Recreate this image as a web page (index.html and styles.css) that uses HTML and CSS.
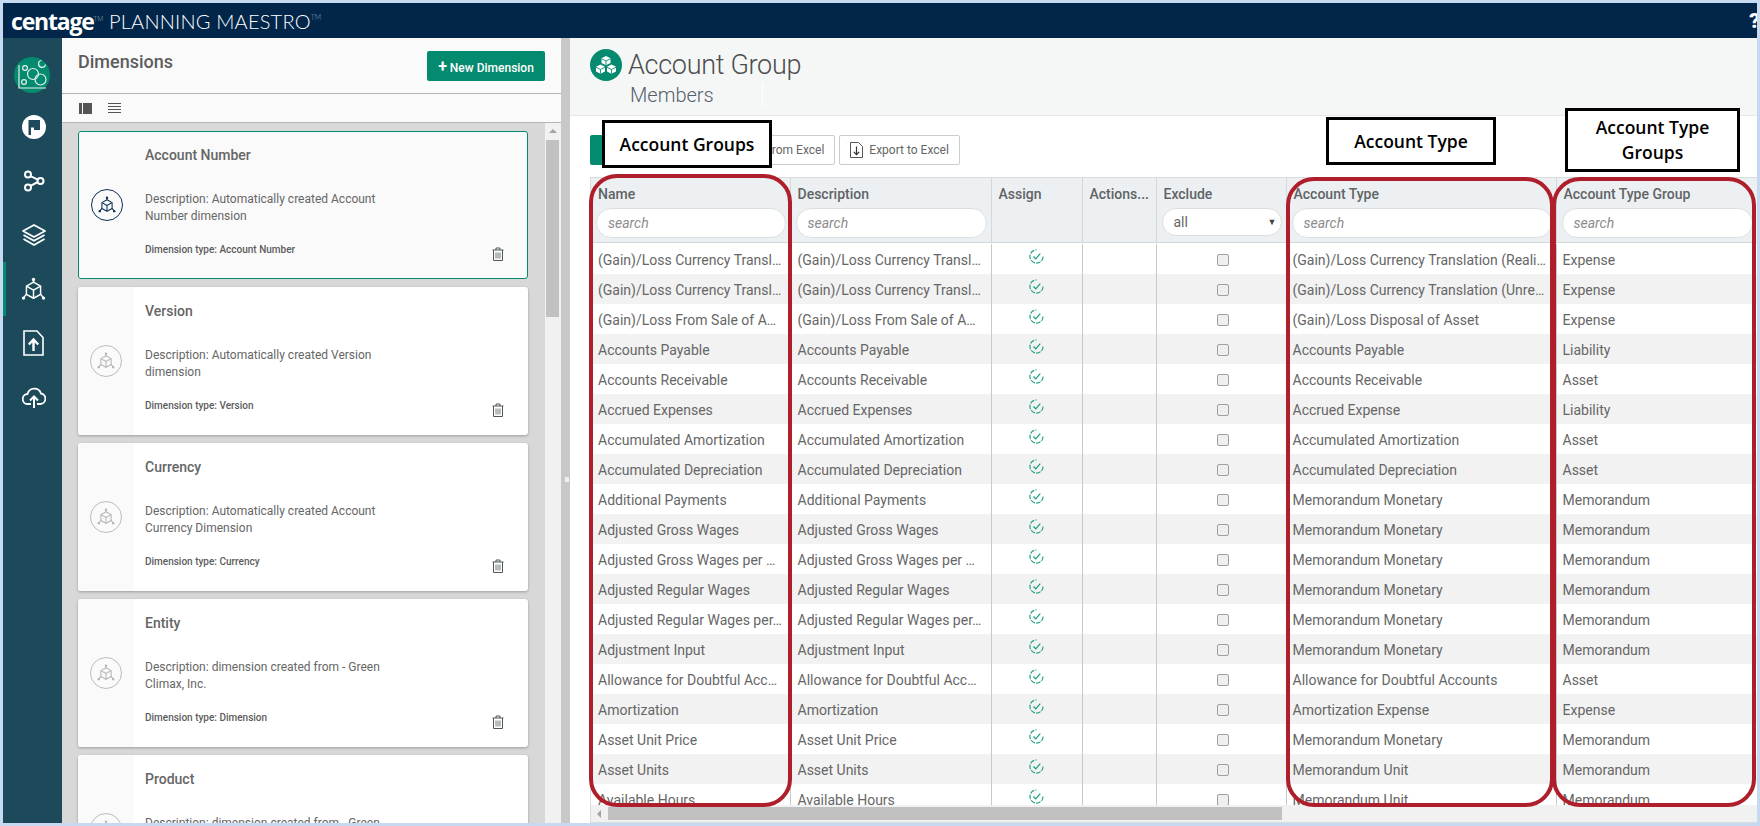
FILE: index.html
```html
<!DOCTYPE html>
<html lang="en">
<head>
    <meta charset="UTF-8">
    <title>Centage Planning Maestro</title>
    <link rel="stylesheet" href="styles.css">
</head>

<body>
    <svg class="icon-defs" aria-hidden="true">
        <symbol id="i-cube" viewBox="0 0 24 24">
            <g fill="none" stroke="currentColor" stroke-width="1.400" stroke-linejoin="round">
                <path d="M12 5l6.800 3.800v7.800L12 20.400l-6.800-3.800V8.800z"/>
                <path d="M5.200 8.800L12 12.600l6.800-3.800M12 12.600v7.800"/>
                <path d="M12 5V2.500M5.200 16.600L2.500 19.800M18.800 16.600l2.700 3.200"/>
            </g>
            <g fill="currentColor">
                <circle cx="12" cy="2.300" r="1.600"/>
                <circle cx="2.400" cy="20.200" r="1.600"/>
                <circle cx="21.600" cy="20.200" r="1.600"/>
            </g>
        </symbol>
        <symbol id="i-trash" viewBox="0 0 12 14">
            <g fill="none" stroke="currentColor" stroke-width="1">
                <path d="M.5 3h11M4 3V1h4v2M1.500 3v10.500h9V3"/>
                <path d="M4 5.500v6M6 5.500v6M8 5.500v6" stroke-width=".8"/>
            </g>
        </symbol>
        <symbol id="i-check" viewBox="0 0 16 16">
            <g fill="none" stroke="#1c9c80">
                <path d="M15 8A7 7 0 1 1 8 1" stroke-width="1.200" stroke-dasharray="5 1.300"/>
                <path d="M4.800 8l2.400 2.600 4.800-5.600" stroke-width="1.300"/>
            </g>
        </symbol>
        <symbol id="i-sheet" viewBox="0 0 13 16">
            <path d="M.5.5h8l4 4v11H.5z" fill="none" stroke="#555"/>
            <path d="M6.500 4.500v8M3.800 9.800l2.700 2.900 2.700-2.900" fill="none" stroke="#333" stroke-width="1.200"/>
        </symbol>
    </svg>

    <div class="app">
        <header class="topbar">
            <span class="brand">centage<sup>TM</sup></span>
            <span class="product">PLANNING MAESTRO<sup>TM</sup></span>
            <span class="help">?</span>
        </header>

        <div class="workspace">
            <nav class="sidebar">
                <svg class="nav-logo" viewBox="0 0 36 36">
                    <circle cx="18" cy="18" r="18" fill="#048a6e"/>
                    <g fill="none" stroke="#e4f2ee" stroke-width="1.200">
                        <path d="M5 8v23h27"/>
                        <circle cx="11" cy="11" r="2.400"/>
                        <circle cx="10" cy="25" r="2.400"/>
                        <circle cx="19" cy="17" r="5.500"/>
                        <circle cx="26.500" cy="22.500" r="5.500"/>
                        <path d="M27.500 3.500a3.500 3.500 0 1 0 4 4"/>
                    </g>
                </svg>
                <a class="nav-item">
                    <svg width="24" height="24" viewBox="0 0 24 24">
                        <circle cx="12" cy="12" r="12" fill="#fff"/>
                        <path d="M6.500 5h11.500v10h-6v-2.500H9V20H6.500z" fill="#1c4a5a"/>
                    </svg>
                </a>
                <a class="nav-item">
                    <svg width="22" height="22" viewBox="0 0 22 22" fill="none" stroke="#fff" stroke-width="2">
                        <circle cx="5" cy="4.500" r="3"/>
                        <circle cx="5" cy="17.500" r="3"/>
                        <circle cx="17.500" cy="11" r="3"/>
                        <path d="M7.500 6.200l7.300 3.400M7.500 15.800l7.300-3.800"/>
                    </svg>
                </a>
                <a class="nav-item">
                    <svg width="24" height="22" viewBox="0 0 24 22" fill="none" stroke="#fff" stroke-width="1.800" stroke-linejoin="round">
                        <path d="M12 1L23 7l-11 6L1 7z"/>
                        <path d="M1.500 11l10.500 5.800L22.500 11"/>
                        <path d="M1.500 15l10.500 6 10.500-6"/>
                    </svg>
                </a>
                <a class="nav-item active">
                    <svg class="nav-cube"><use href="#i-cube"/></svg>
                </a>
                <a class="nav-item">
                    <svg width="21" height="26" viewBox="0 0 21 26" fill="none" stroke="#fff" stroke-width="1.600">
                        <path d="M1 1h13l6 6.500V25H1z"/>
                        <path d="M10.500 21V10M5.800 14.500l4.700-5 4.700 5" stroke-width="2.400"/>
                    </svg>
                </a>
                <a class="nav-item">
                    <svg width="24" height="22" viewBox="0 0 24 22" fill="none" stroke="#fff" stroke-width="1.800">
                        <path d="M9 18H6a5 5 0 0 1-.5-10A7 7 0 0 1 19 7.500a5.300 5.300 0 0 1-.5 10.500H15"/>
                        <path d="M12 22V11M8 14.500l4-4 4 4" stroke-width="2"/>
                    </svg>
                </a>
            </nav>

            <section class="panel">
                <div class="panel-head">
                    <h2 class="panel-title">Dimensions</h2>
                    <button class="btn-new"><span class="plus">+</span>New Dimension</button>
                </div>
                <div class="panel-tools">
                    <span class="tool-cards"></span>
                    <span class="tool-list"></span>
                </div>
                <div class="panel-body">
                    <div class="card-list">
                        <article class="card selected">
                            <div class="card-side"><span class="dim-badge"><svg><use href="#i-cube"/></svg></span></div>
                            <div class="card-main">
                                <h3>Account Number</h3>
                                <p class="card-desc">Description: Automatically created Account Number dimension</p>
                                <div class="card-foot">
                                    <span>Dimension type: Account Number</span>
                                    <svg class="trash"><use href="#i-trash"/></svg>
                                </div>
                            </div>
                        </article>
                        <article class="card">
                            <div class="card-side"><span class="dim-badge"><svg><use href="#i-cube"/></svg></span></div>
                            <div class="card-main">
                                <h3>Version</h3>
                                <p class="card-desc">Description: Automatically created Version dimension</p>
                                <div class="card-foot">
                                    <span>Dimension type: Version</span>
                                    <svg class="trash"><use href="#i-trash"/></svg>
                                </div>
                            </div>
                        </article>
                        <article class="card">
                            <div class="card-side"><span class="dim-badge"><svg><use href="#i-cube"/></svg></span></div>
                            <div class="card-main">
                                <h3>Currency</h3>
                                <p class="card-desc">Description: Automatically created Account Currency Dimension</p>
                                <div class="card-foot">
                                    <span>Dimension type: Currency</span>
                                    <svg class="trash"><use href="#i-trash"/></svg>
                                </div>
                            </div>
                        </article>
                        <article class="card">
                            <div class="card-side"><span class="dim-badge"><svg><use href="#i-cube"/></svg></span></div>
                            <div class="card-main">
                                <h3>Entity</h3>
                                <p class="card-desc">Description: dimension created from - Green Climax, Inc.</p>
                                <div class="card-foot">
                                    <span>Dimension type: Dimension</span>
                                    <svg class="trash"><use href="#i-trash"/></svg>
                                </div>
                            </div>
                        </article>
                        <article class="card">
                            <div class="card-side"><span class="dim-badge"><svg><use href="#i-cube"/></svg></span></div>
                            <div class="card-main">
                                <h3>Product</h3>
                                <p class="card-desc">Description: dimension created from - Green Climax, Inc.</p>
                                <div class="card-foot">
                                    <span>Dimension type: Dimension</span>
                                    <svg class="trash"><use href="#i-trash"/></svg>
                                </div>
                            </div>
                        </article>
                    </div>
                    <div class="vscroll"><span class="vscroll-up"></span><span class="vscroll-thumb"></span></div>
                </div>
            </section>

            <div class="splitter"><span class="splitter-grip"></span></div>

            <main class="content">
                <div class="content-head">
                    <span class="group-badge">
                        <svg width="22" height="18" viewBox="0 0 22 18" fill="#fff">
                            <path d="M11 0l4.500 2.300v4.600L11 9.200 6.500 6.900V2.300z"/>
                            <path d="M5.500 8.500L10 10.800v4.600L5.500 17.700 1 15.400v-4.600z"/>
                            <path d="M16.500 8.500l4.500 2.300v4.600l-4.500 2.300-4.500-2.300v-4.600z"/>
                            <g fill="none" stroke="#048a6e" stroke-width=".9">
                                <path d="M6.500 2.800L11 5l4.500-2.200M11 5v4"/>
                                <path d="M1 11.200l4.500 2.300 4.500-2.300M5.500 13.500v4"/>
                                <path d="M12 11.200l4.500 2.300 4.500-2.300M16.500 13.500v4"/>
                            </g>
                        </svg>
                    </span>
                    <div class="head-text">
                        <h1>Account Group</h1>
                        <div class="head-sub">Members</div>
                    </div>
                </div>

                <div class="content-body">
                    <div class="grid-tools">
                        <button class="btn-add">+ New Member</button>
                        <button class="btn-excel"><svg class="sheet"><use href="#i-sheet"/></svg>Import from Excel</button>
                        <button class="btn-excel"><svg class="sheet"><use href="#i-sheet"/></svg>Export to Excel</button>
                    </div>

                    <div class="grid">
                        <div class="grid-head">
                            <table>
                                <colgroup><col class="c-name"><col class="c-desc"><col class="c-assign"><col class="c-actions"><col class="c-exclude"><col class="c-type"><col class="c-group"></colgroup>
                                <tr>
                                    <th>Name<input class="search" placeholder="search"></th>
                                    <th>Description<input class="search" placeholder="search"></th>
                                    <th>Assign</th>
                                    <th>Actions...</th>
                                    <th>Exclude<span class="select-wrap"><select><option>all</option></select></span></th>
                                    <th>Account Type<input class="search" placeholder="search"></th>
                                    <th>Account Type Group<input class="search" placeholder="search"></th>
                                </tr>
                            </table>
                        </div>
                        <div class="grid-body">
                            <table>
                                <colgroup><col class="c-name"><col class="c-desc"><col class="c-assign"><col class="c-actions"><col class="c-exclude"><col class="c-type"><col class="c-group"></colgroup>
                                <tr><td>(Gain)/Loss Currency Transl…</td><td>(Gain)/Loss Currency Transl…</td><td class="mid"><svg class="check"><use href="#i-check"/></svg></td><td></td><td class="mid"><input type="checkbox" disabled></td><td>(Gain)/Loss Currency Translation (Reali…</td><td>Expense</td></tr>
                                <tr><td>(Gain)/Loss Currency Transl…</td><td>(Gain)/Loss Currency Transl…</td><td class="mid"><svg class="check"><use href="#i-check"/></svg></td><td></td><td class="mid"><input type="checkbox" disabled></td><td>(Gain)/Loss Currency Translation (Unre…</td><td>Expense</td></tr>
                                <tr><td>(Gain)/Loss From Sale of A…</td><td>(Gain)/Loss From Sale of A…</td><td class="mid"><svg class="check"><use href="#i-check"/></svg></td><td></td><td class="mid"><input type="checkbox" disabled></td><td>(Gain)/Loss Disposal of Asset</td><td>Expense</td></tr>
                                <tr><td>Accounts Payable</td><td>Accounts Payable</td><td class="mid"><svg class="check"><use href="#i-check"/></svg></td><td></td><td class="mid"><input type="checkbox" disabled></td><td>Accounts Payable</td><td>Liability</td></tr>
                                <tr><td>Accounts Receivable</td><td>Accounts Receivable</td><td class="mid"><svg class="check"><use href="#i-check"/></svg></td><td></td><td class="mid"><input type="checkbox" disabled></td><td>Accounts Receivable</td><td>Asset</td></tr>
                                <tr><td>Accrued Expenses</td><td>Accrued Expenses</td><td class="mid"><svg class="check"><use href="#i-check"/></svg></td><td></td><td class="mid"><input type="checkbox" disabled></td><td>Accrued Expense</td><td>Liability</td></tr>
                                <tr><td>Accumulated Amortization</td><td>Accumulated Amortization</td><td class="mid"><svg class="check"><use href="#i-check"/></svg></td><td></td><td class="mid"><input type="checkbox" disabled></td><td>Accumulated Amortization</td><td>Asset</td></tr>
                                <tr><td>Accumulated Depreciation</td><td>Accumulated Depreciation</td><td class="mid"><svg class="check"><use href="#i-check"/></svg></td><td></td><td class="mid"><input type="checkbox" disabled></td><td>Accumulated Depreciation</td><td>Asset</td></tr>
                                <tr><td>Additional Payments</td><td>Additional Payments</td><td class="mid"><svg class="check"><use href="#i-check"/></svg></td><td></td><td class="mid"><input type="checkbox" disabled></td><td>Memorandum Monetary</td><td>Memorandum</td></tr>
                                <tr><td>Adjusted Gross Wages</td><td>Adjusted Gross Wages</td><td class="mid"><svg class="check"><use href="#i-check"/></svg></td><td></td><td class="mid"><input type="checkbox" disabled></td><td>Memorandum Monetary</td><td>Memorandum</td></tr>
                                <tr><td>Adjusted Gross Wages per …</td><td>Adjusted Gross Wages per …</td><td class="mid"><svg class="check"><use href="#i-check"/></svg></td><td></td><td class="mid"><input type="checkbox" disabled></td><td>Memorandum Monetary</td><td>Memorandum</td></tr>
                                <tr><td>Adjusted Regular Wages</td><td>Adjusted Regular Wages</td><td class="mid"><svg class="check"><use href="#i-check"/></svg></td><td></td><td class="mid"><input type="checkbox" disabled></td><td>Memorandum Monetary</td><td>Memorandum</td></tr>
                                <tr><td>Adjusted Regular Wages per…</td><td>Adjusted Regular Wages per…</td><td class="mid"><svg class="check"><use href="#i-check"/></svg></td><td></td><td class="mid"><input type="checkbox" disabled></td><td>Memorandum Monetary</td><td>Memorandum</td></tr>
                                <tr><td>Adjustment Input</td><td>Adjustment Input</td><td class="mid"><svg class="check"><use href="#i-check"/></svg></td><td></td><td class="mid"><input type="checkbox" disabled></td><td>Memorandum Monetary</td><td>Memorandum</td></tr>
                                <tr><td>Allowance for Doubtful Acc…</td><td>Allowance for Doubtful Acc…</td><td class="mid"><svg class="check"><use href="#i-check"/></svg></td><td></td><td class="mid"><input type="checkbox" disabled></td><td>Allowance for Doubtful Accounts</td><td>Asset</td></tr>
                                <tr><td>Amortization</td><td>Amortization</td><td class="mid"><svg class="check"><use href="#i-check"/></svg></td><td></td><td class="mid"><input type="checkbox" disabled></td><td>Amortization Expense</td><td>Expense</td></tr>
                                <tr><td>Asset Unit Price</td><td>Asset Unit Price</td><td class="mid"><svg class="check"><use href="#i-check"/></svg></td><td></td><td class="mid"><input type="checkbox" disabled></td><td>Memorandum Monetary</td><td>Memorandum</td></tr>
                                <tr><td>Asset Units</td><td>Asset Units</td><td class="mid"><svg class="check"><use href="#i-check"/></svg></td><td></td><td class="mid"><input type="checkbox" disabled></td><td>Memorandum Unit</td><td>Memorandum</td></tr>
                                <tr><td>Available Hours</td><td>Available Hours</td><td class="mid"><svg class="check"><use href="#i-check"/></svg></td><td></td><td class="mid"><input type="checkbox" disabled></td><td>Memorandum Unit</td><td>Memorandum</td></tr>
                            </table>
                        </div>
                        <div class="hscroll"><span class="hscroll-left"></span><span class="hscroll-thumb"></span></div>
                    </div>
                </div>
            </main>
        </div>
    </div>

    <!-- callouts drawn on top of the screenshot -->
    <div class="oval oval-name"></div>
    <div class="oval oval-type"></div>
    <div class="oval oval-group"></div>
    <div class="callout callout-name">Account Groups</div>
    <div class="callout callout-type">Account Type</div>
    <div class="callout callout-group">Account Type<br>Groups</div>
</body>
</html>
```

FILE: styles.css
```css
* {
    margin: 0;
    padding: 0;
    box-sizing: border-box;
}

body {
    position: relative;
    width: 1760px;
    height: 826px;
    padding: 3px;
    overflow: hidden;
    background: #c6d9f1;
    font-family: 'Roboto', sans-serif;
    color: #666666;
}

.icon-defs {
    position: absolute;
    width: 0;
    height: 0;
}

.app {
    display: flex;
    flex-direction: column;
    height: 820px;
    overflow: hidden;
    background: #ffffff;
}

/* top bar */
.topbar {
    display: flex;
    align-items: center;
    flex: none;
    height: 35px;
    padding-left: 8px;
    background: #01264a;
    color: #ffffff;
}

.brand {
    width: 98px;
    font-family: 'Open Sans', sans-serif;
    font-size: 23px;
    font-weight: 700;
    letter-spacing: -1.2px;
}

.product {
    font-family: 'Lato', sans-serif;
    font-size: 20px;
    font-weight: 300;
    letter-spacing: 0.2px;
}

.topbar sup {
    font-size: 7px;
    font-weight: 300;
    letter-spacing: 0;
    color: #8fa0b2;
    vertical-align: 9px;
}

.help {
    margin-left: auto;
    margin-right: -3px;
    font-size: 21px;
    font-weight: 900;
}

.workspace {
    display: flex;
    flex: 1;
    min-height: 0;
}

/* left icon rail */
.sidebar {
    flex: none;
    width: 59px;
    padding-top: 19px;
    background: #1c4a5a;
}

.nav-logo {
    display: block;
    width: 36px;
    height: 36px;
    margin: 0 0 7px 11px;
}

.nav-item {
    display: flex;
    justify-content: center;
    align-items: center;
    height: 54px;
    border-left: 3px solid transparent;
    color: #ffffff;
}

.nav-item svg {
    margin-left: -1px;
}

.nav-item.active {
    border-left-color: #048a6e;
}

.nav-cube {
    width: 25px;
    height: 25px;
}

/* dimensions panel */
.panel {
    display: flex;
    flex-direction: column;
    flex: none;
    width: 499px;
    background: #fafafa;
}

.panel-head {
    display: flex;
    justify-content: space-between;
    align-items: flex-start;
    flex: none;
    height: 56px;
    padding: 13px 16px 0;
    border-bottom: 1px solid #b4b4b4;
}

.panel-title {
    font-size: 18px;
    font-weight: 500;
    line-height: 22px;
    color: #5c5c5c;
}

.btn-new {
    width: 118px;
    height: 30px;
    border: none;
    border-radius: 2px;
    background: #048a6e;
    color: #ffffff;
    font-family: 'Roboto', sans-serif;
    font-size: 12px;
    font-weight: 500;
}

.plus {
    margin-right: 3px;
    font-size: 16px;
    font-weight: 700;
}

.panel-tools {
    display: flex;
    align-items: center;
    gap: 16px;
    flex: none;
    height: 29px;
    padding-left: 17px;
    border-bottom: 1px solid #b4b4b4;
}

.tool-cards {
    width: 13px;
    height: 11px;
    border-left: 3px solid #555555;
    background: #555555;
    box-shadow: inset 1px 0 0 #fafafa;
}

.tool-list {
    width: 13px;
    height: 11px;
    background: repeating-linear-gradient(#555555 0 1px, transparent 1px 3px);
}

.panel-body {
    display: flex;
    flex: 1;
    min-height: 0;
    background: #d8d8d8;
}

.card-list {
    flex: 1;
    padding: 8px 17px 0 16px;
    overflow: hidden;
}

.card {
    display: flex;
    height: 148px;
    margin-bottom: 8px;
    border-radius: 3px;
    background: #ffffff;
    box-shadow: 0 1px 3px rgba(0, 0, 0, 0.28);
}

.card.selected {
    border: 1px solid #048a6e;
    background: #fafafa;
    box-shadow: none;
}

.card-side {
    display: flex;
    justify-content: center;
    align-items: center;
    flex: none;
    width: 56px;
    background: #fafafa;
    border-radius: 3px 0 0 3px;
}

.selected .card-side {
    width: 55px;
}

.dim-badge {
    display: flex;
    justify-content: center;
    align-items: center;
    width: 32px;
    height: 32px;
    border: 1px solid #bdbdbd;
    border-radius: 50%;
    color: #b5b5b5;
}

.dim-badge svg {
    width: 18px;
    height: 18px;
}

.selected .dim-badge {
    border-color: #0c2f52;
    color: #0c2f52;
}

.card-main {
    flex: 1;
    padding: 16px 24px 0 11px;
}

.selected .card-main {
    padding-top: 15px;
    padding-right: 23px;
}

.card-main h3 {
    font-size: 14px;
    font-weight: 500;
    line-height: 17px;
    color: #666666;
}

.card-desc {
    width: 245px;
    margin-top: 27px;
    font-size: 12px;
    line-height: 17px;
}

.card-foot {
    display: flex;
    justify-content: space-between;
    margin-top: 18px;
    font-size: 10px;
    font-weight: 500;
    line-height: 14px;
    color: #5c5c5c;
}

.trash {
    width: 12px;
    height: 14px;
    margin-top: 4px;
    color: #4f5a50;
}

.vscroll {
    position: relative;
    flex: none;
    width: 16px;
    padding: 17px 2px 0 1px;
    background: #f1f1f1;
}

.vscroll-up {
    position: absolute;
    top: 6px;
    left: 4px;
    border: 4px solid transparent;
    border-top: none;
    border-bottom: 4px solid #a3a3a3;
}

.vscroll-thumb {
    display: block;
    height: 177px;
    background: #c1c1c1;
}

.splitter {
    position: relative;
    flex: none;
    width: 9px;
    background: #c8c8c8;
}

.splitter-grip {
    position: absolute;
    top: 439px;
    left: 4px;
    width: 4px;
    height: 5px;
    background: #f0f0f0;
}

/* members table */
.content {
    display: flex;
    flex-direction: column;
    flex: 1;
    min-width: 0;
}

.content-head {
    display: flex;
    flex: none;
    height: 78px;
    padding: 11px 0 0 20px;
    background: #f5f7f7;
    border-bottom: 1px solid #e6e8e8;
}

.group-badge {
    display: flex;
    justify-content: center;
    align-items: center;
    flex: none;
    width: 32px;
    height: 32px;
    border-radius: 50%;
    background: #048a6e;
}

.head-text {
    margin-left: 6px;
}

.head-text h1 {
    font-size: 27px;
    font-weight: 300;
    line-height: 32px;
    letter-spacing: -0.3px;
    color: #4d4d4d;
}

.head-sub {
    width: 133px;
    height: 24px;
    margin: 2px 0 0 2px;
    border-right: 1px solid #ffffff;
    font-size: 20px;
    font-weight: 300;
    line-height: 24px;
    color: #55606b;
}

.content-body {
    display: flex;
    flex-direction: column;
    flex: 1;
    min-height: 0;
    padding: 19px 0 0 20px;
}

.grid-tools {
    display: flex;
    gap: 4px;
    flex: none;
    height: 30px;
    margin-bottom: 12px;
}

.btn-add {
    width: 105px;
    border: none;
    border-radius: 2px;
    background: #048a6e;
    color: #ffffff;
    font-family: 'Roboto', sans-serif;
    font-size: 12px;
}

.btn-excel {
    display: flex;
    align-items: center;
    gap: 6px;
    padding: 0 10px;
    border: 1px solid #cccccc;
    border-radius: 2px;
    background: #ffffff;
    color: #666666;
    font-family: 'Roboto', sans-serif;
    font-size: 12px;
}

.sheet {
    width: 13px;
    height: 16px;
}

.grid {
    display: flex;
    flex-direction: column;
    flex: 1;
    min-height: 0;
    border-top: 1px solid #d9dcdd;
    border-left: 1px solid #d9dcdd;
    border-bottom: 1px solid #d9dcdd;
}

.grid table {
    width: 1166px;
    table-layout: fixed;
    border-collapse: collapse;
}

.c-name { width: 199px; }
.c-desc { width: 201px; }
.c-assign { width: 91px; }
.c-actions { width: 74px; }
.c-exclude { width: 130px; }
.c-type { width: 270px; }
.c-group { width: 201px; }

.grid-head {
    flex: none;
    height: 65px;
    background: #edf0f2;
    border-bottom: 1px solid #d5d8d9;
}

.grid-head th {
    height: 64px;
    padding: 9px 5px 0 7px;
    vertical-align: top;
    text-align: left;
    border-left: 1px solid #d5d8d9;
    font-size: 14px;
    font-weight: 500;
    line-height: 15px;
    color: #5f6466;
}

.grid-head th:first-child {
    border-left: none;
}

.search {
    display: block;
    width: calc(100% + 3px);
    height: 30px;
    margin: 6px 0 0 -2px;
    padding: 0 11px;
    border: 1px solid #dcdfe0;
    border-radius: 15px;
    background: #ffffff;
    font-family: 'Roboto', sans-serif;
    font-size: 14px;
}

.search::placeholder {
    font-style: italic;
    color: #8c8c8c;
}

.select-wrap {
    position: relative;
    display: block;
    width: 120px;
    height: 28px;
    margin: 6px 0 0 -2px;
}

.select-wrap select {
    width: 100%;
    height: 28px;
    padding-left: 11px;
    appearance: none;
    border: 1px solid #dcdfe0;
    border-radius: 14px;
    background: #ffffff;
    color: #666666;
    font-family: 'Roboto', sans-serif;
    font-size: 14px;
}

.select-wrap::after {
    content: "\25BC";
    position: absolute;
    top: 7px;
    right: 5px;
    font-size: 9px;
    color: #444444;
}

.grid-body {
    flex: 1;
    min-height: 0;
    margin-top: 1px;
    overflow: hidden;
}

.grid-body td {
    height: 30px;
    padding: 2px 0 0 7px;
    border-left: 1px solid #c9c9c9;
    font-size: 14px;
    white-space: nowrap;
    overflow: hidden;
    color: #666666;
}

.grid-body td:first-child {
    border-left: none;
}

.grid-body td:nth-child(n+6) {
    padding-left: 6px;
}

.grid-body tr:nth-child(even) td {
    background: #f2f2f2;
}

.grid-body .mid {
    padding: 0 7px;
    text-align: center;
}

.check {
    display: block;
    width: 15px;
    height: 15px;
    margin: -5px auto 0;
}

.grid-body input[type="checkbox"] {
    display: block;
    width: 12px;
    height: 12px;
    margin: 1px 0 0 53px;
    appearance: none;
    border: 1px solid #9e9e9e;
    border-radius: 2px;
    background: #efefef;
}

.hscroll {
    display: flex;
    align-items: center;
    flex: none;
    height: 17px;
    padding-left: 17px;
    position: relative;
    background: #f1f1f1;
}

.hscroll-left {
    position: absolute;
    top: 5px;
    left: 6px;
    border: 4px solid transparent;
    border-left: none;
    border-right: 4px solid #a3a3a3;
}

.hscroll-thumb {
    width: 674px;
    height: 13px;
    background: #c1c1c1;
}

/* callouts */
.oval {
    position: absolute;
    border: 4px solid #ae1f2b;
    border-radius: 28px;
}

.oval-name {
    top: 174px;
    left: 589px;
    width: 203px;
    height: 633px;
}

.oval-type {
    top: 177px;
    left: 1286px;
    width: 268px;
    height: 630px;
}

.oval-group {
    top: 177px;
    left: 1552px;
    width: 204px;
    height: 630px;
}

.callout {
    position: absolute;
    display: flex;
    justify-content: center;
    align-items: center;
    border: 3px solid #000000;
    background: #ffffff;
    color: #000000;
    font-family: 'Open Sans', sans-serif;
    font-size: 17.5px;
    font-weight: 600;
    line-height: 25px;
    text-align: center;
}

.callout-name {
    top: 120px;
    left: 602px;
    width: 170px;
    height: 48px;
}

.callout-type {
    top: 117px;
    left: 1326px;
    width: 170px;
    height: 48px;
}

.callout-group {
    top: 108px;
    left: 1565px;
    width: 175px;
    height: 64px;
}
```
